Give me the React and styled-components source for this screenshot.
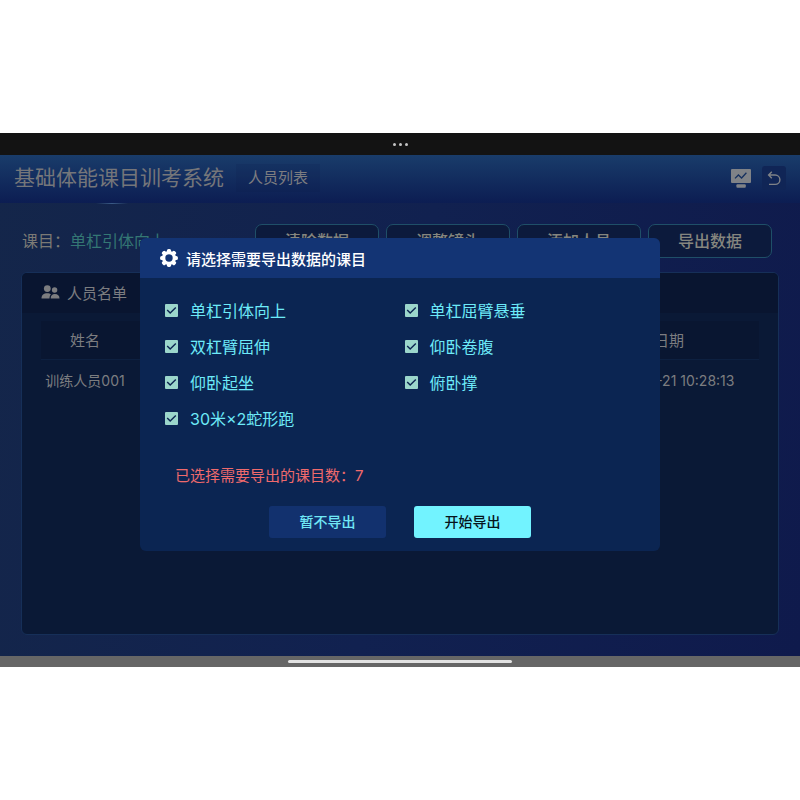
import React, { useState } from "react";
import styled, { createGlobalStyle } from "styled-components";

const check = encodeURIComponent(
  '<svg xmlns="http://www.w3.org/2000/svg" viewBox="0 0 13 13"><path d="M2.2 6l3 3L10.8 3.6" fill="none" stroke="#0b2450" stroke-width="1.4"/></svg>'
);

const GlobalStyle = createGlobalStyle`
  * {
    box-sizing: border-box;
  }

  body {
    margin: 0;
    background: #ffffff;
    font-family: Inter, "Noto Sans CJK SC", sans-serif;
  }

  button {
    font-family: inherit;
    cursor: pointer;
  }
`;

const Page = styled.div`
  min-height: 100vh;
  display: flex;
  flex-direction: column;
  justify-content: center;
`;

const Screen = styled.div`
  position: relative;
`;

const StatusBar = styled.div`
  height: 22px;
  display: flex;
  align-items: center;
  justify-content: center;
  gap: 3px;
  background: #131313;
`;

const Dot = styled.span`
  width: 3px;
  height: 3px;
  border-radius: 50%;
  background: #c4c4c4;
`;

const AppBody = styled.div`
  background: linear-gradient(100deg, #14264a 0%, #112150 50%, #0f1a4c 100%);
`;

const Header = styled.header`
  position: relative;
  height: 48px;
  padding: 0 14px 2px;
  display: flex;
  align-items: center;
  background: linear-gradient(#193c6a, #0c1d52);

  &::after {
    content: "";
    position: absolute;
    left: 12%;
    bottom: -1px;
    width: 32px;
    height: 1px;
    background: linear-gradient(90deg, transparent, #3a5a86, transparent);
  }
`;

const Title = styled.h1`
  margin: 0;
  font-size: 21px;
  line-height: 32px;
  font-weight: 400;
  color: #75767a;
`;

const Crumb = styled.span`
  margin-left: 12px;
  padding: 0 12px;
  font-size: 15px;
  line-height: 28px;
  color: #7d7d80;
  background: rgba(12, 28, 76, 0.15);
`;

const HeaderTools = styled.div`
  flex: 1;
  display: flex;
  align-items: center;
  justify-content: flex-end;
  gap: 11px;
`;

const IconButton = styled.button`
  width: ${props => props.size}px;
  height: 24px;
  padding: 0;
  border: 0;
  border-radius: 3px;
  display: flex;
  align-items: center;
  justify-content: center;
  color: #7f8287;
  background: ${props => props.fill || "transparent"};
`;

const Content = styled.main`
  padding: 21px 21px;
`;

const Toolbar = styled.div`
  padding: 0 7px 0 1px;
  display: flex;
  align-items: center;
  justify-content: space-between;
`;

const Subject = styled.div`
  font-size: 16px;
  line-height: 24px;
  color: #7b7a75;
  white-space: nowrap;
`;

const SubjectName = styled.span`
  color: #347774;
`;

const Actions = styled.div`
  display: flex;
  gap: 7px;
`;

const ActionButton = styled.button`
  width: 124px;
  height: 34px;
  padding: 0 0 2px;
  border: 1px solid #1f4f68;
  border-radius: 7px;
  background: #0c1a3c;
  color: #85867f;
  font-size: 16px;
  font-weight: 500;
`;

const Panel = styled.section`
  min-height: 363px;
  margin-top: 14px;
  border: 1px solid #162f58;
  border-radius: 6px;
  background: #0a1936;
  overflow: hidden;
`;

const PanelTitle = styled.h2`
  height: 40px;
  margin: 0;
  padding: 0 19px 2px;
  display: flex;
  align-items: center;
  gap: 7px;
  background: #091530;
  color: #7c7d80;
  font-size: 15px;
  font-weight: 400;
`;

const PeopleTable = styled.table`
  width: calc(100% - 38px);
  margin: 8px 19px;
  border-collapse: collapse;
  table-layout: fixed;
  color: #7c7d80;
  text-align: center;

  th {
    height: 38px;
    padding: 0;
    font-size: 15px;
    font-weight: 400;
    background: #091631;
    border-bottom: 1px solid #0d2040;
  }

  td {
    height: 42px;
    padding: 0;
    font-size: 14px;
    white-space: nowrap;
  }
`;

const NavBar = styled.div`
  height: 11px;
  display: flex;
  align-items: center;
  justify-content: center;
  background: #666666;
`;

const NavHandle = styled.div`
  width: 28%;
  height: 3px;
  border-radius: 2px;
  background: #e2e2e2;
`;

const Overlay = styled.div`
  position: absolute;
  inset: 0;
  display: flex;
  align-items: center;
  justify-content: center;
`;

const Dialog = styled.form`
  width: 65%;
  border-radius: 6px;
  background: #0b2552;
  overflow: hidden;
`;

const DialogTitle = styled.h2`
  height: 40px;
  margin: 0;
  padding: 0 20px;
  display: flex;
  align-items: center;
  gap: 8px;
  background: #133474;
  color: #ffffff;
  font-size: 15px;
  font-weight: 500;
`;

const Options = styled.div`
  padding: 14px 16px 0 25px;
  display: grid;
  grid-template-columns: 1fr 1fr;
`;

const Option = styled.label`
  height: 36px;
  display: flex;
  align-items: center;
  gap: 12px;
  color: #6deaf8;
  font-size: 16px;
`;

const Checkbox = styled.input`
  appearance: none;
  width: 13px;
  height: 13px;
  margin: 0;
  border-radius: 1px;
  background: #9bd6cb;

  &:checked {
    background-image: url("data:image/svg+xml,${check}");
  }
`;

const Summary = styled.p`
  margin: 28px 35px 18px;
  font-size: 15px;
  line-height: 24px;
  color: #ef6a6c;
`;

const DialogActions = styled.div`
  padding-bottom: 13px;
  display: flex;
  justify-content: center;
  gap: 28px;
`;

const DialogButton = styled.button`
  width: 117px;
  height: 32px;
  padding: 0 0 2px;
  border: 0;
  border-radius: 3px;
  font-size: 14px;
  font-weight: 500;
  color: ${props => (props.$primary ? "#06141c" : "#70e8f6")};
  background: ${props => (props.$primary ? "#72f3ff" : "#12316e")};
`;

const GearIcon = () => (
  <svg width="18" height="18" viewBox="0 0 18 18" aria-hidden="true">
    <g fill="#ffffff">
      {[0, 45, 90, 135].map(angle => (
        <rect
          key={angle}
          x="6.9"
          y="0.1"
          width="4.2"
          height="17.8"
          rx="1.6"
          transform={`rotate(${angle} 9 9)`}
        />
      ))}
      <circle cx="9" cy="9" r="7" />
    </g>
    <circle cx="9" cy="9" r="3.7" fill="#133474" />
  </svg>
);

const PeopleIcon = () => (
  <svg width="19" height="14" viewBox="0 0 19 14" fill="currentColor" aria-hidden="true">
    <circle cx="6.3" cy="3.6" r="3.4" />
    <path d="M0.5 13.5C0.5 10 2.8 8.2 6.3 8.2c1.6 0 2.8.4 3.7 1.1-1 1-1.5 2.4-1.5 4.2z" />
    <circle cx="13.6" cy="5" r="2.7" />
    <path d="M9.7 13.5c0-2.8 1.4-4.5 4.2-4.5s4.6 1.7 4.6 4.5z" />
  </svg>
);

const MonitorIcon = () => (
  <svg width="20" height="19" viewBox="0 0 20 19" aria-hidden="true">
    <rect width="20" height="14" rx="1" fill="currentColor" />
    <rect x="5.4" y="15.2" width="9.4" height="3.6" rx="1" fill="currentColor" />
    <path
      d="M4 9.4L7.4 6l3.2 3L15.4 3.8"
      fill="none"
      stroke="#15305f"
      strokeWidth="1.3"
    />
  </svg>
);

const BackIcon = () => (
  <svg width="14" height="15" viewBox="0 0 14 15" aria-hidden="true">
    <path
      d="M4.8 0.8L1.6 4l3.2 3.2M1.8 4h6.4a4.7 4.7 0 0 1 0 9.4H2"
      fill="none"
      stroke="currentColor"
      strokeWidth="1.4"
    />
  </svg>
);

const actions = ["清除数据", "调整镜头", "添加人员", "导出数据"];

const subjects = [
  "单杠引体向上",
  "单杠屈臂悬垂",
  "双杠臂屈伸",
  "仰卧卷腹",
  "仰卧起坐",
  "俯卧撑",
  "30米×2蛇形跑"
];

const ExportDialog = () => {
  const [selected, setSelected] = useState(subjects);

  const toggle = name =>
    setSelected(
      selected.includes(name)
        ? selected.filter(item => item !== name)
        : [...selected, name]
    );

  return (
    <Dialog role="dialog" aria-labelledby="export-title">
      <DialogTitle id="export-title">
        <GearIcon />
        请选择需要导出数据的课目
      </DialogTitle>
      <Options>
        {subjects.map(name => (
          <Option key={name}>
            <Checkbox
              type="checkbox"
              checked={selected.includes(name)}
              onChange={() => toggle(name)}
            />
            {name}
          </Option>
        ))}
      </Options>
      <Summary>已选择需要导出的课目数：{selected.length}</Summary>
      <DialogActions>
        <DialogButton type="button">暂不导出</DialogButton>
        <DialogButton type="button" $primary>
          开始导出
        </DialogButton>
      </DialogActions>
    </Dialog>
  );
};

const App = () => (
  <Page>
    <GlobalStyle />
    <Screen>
      <StatusBar>
        <Dot />
        <Dot />
        <Dot />
      </StatusBar>
      <AppBody>
        <Header>
          <Title>基础体能课目训考系统</Title>
          <Crumb>人员列表</Crumb>
          <HeaderTools>
            <IconButton type="button" size={20}>
              <MonitorIcon />
            </IconButton>
            <IconButton type="button" size={24} fill="#102556">
              <BackIcon />
            </IconButton>
          </HeaderTools>
        </Header>
        <Content>
          <Toolbar>
            <Subject>
              课目：<SubjectName>单杠引体向上</SubjectName>
            </Subject>
            <Actions>
              {actions.map(name => (
                <ActionButton key={name} type="button">
                  {name}
                </ActionButton>
              ))}
            </Actions>
          </Toolbar>
          <Panel>
            <PanelTitle>
              <PeopleIcon />
              人员名单
            </PanelTitle>
            <PeopleTable>
              <colgroup>
                <col width="88" />
                <col />
                <col width="180" />
              </colgroup>
              <thead>
                <tr>
                  <th>姓名</th>
                  <th />
                  <th>日期</th>
                </tr>
              </thead>
              <tbody>
                <tr>
                  <td>训练人员001</td>
                  <td />
                  <td>2024-11-21 10:28:13</td>
                </tr>
              </tbody>
            </PeopleTable>
          </Panel>
        </Content>
      </AppBody>
      <Overlay>
        <ExportDialog />
      </Overlay>
    </Screen>
    <NavBar>
      <NavHandle />
    </NavBar>
  </Page>
);

export default App;
